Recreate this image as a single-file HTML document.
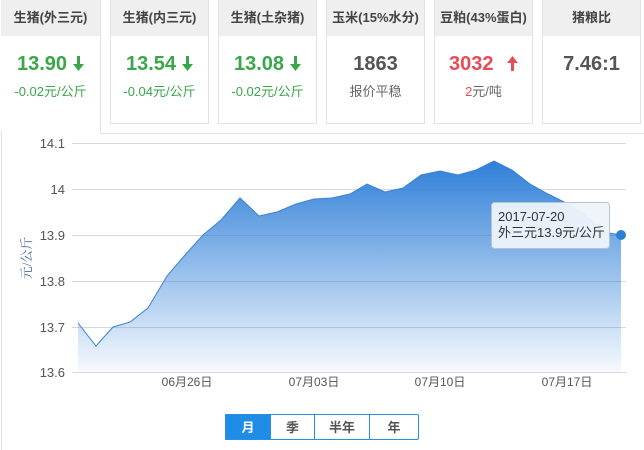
<!DOCTYPE html>
<html><head><meta charset="utf-8"><style>
*{margin:0;padding:0;box-sizing:border-box}
body{width:644px;height:450px;background:#fff;font-family:"Liberation Sans","Noto Sans CJK SC",sans-serif;position:relative;overflow:hidden}
.card{position:absolute;top:0;height:124px;border:1px solid #e2e2e2;border-top:none;background:#fff;text-align:center}
.hd{height:36px;background:#efefef;line-height:36px;font-size:13px;font-weight:bold;color:#444}
.v{font-size:20px;font-weight:bold;margin-top:13px;height:30px;line-height:30px;color:#555}
.s{font-size:13px;color:#666;margin-top:2px}
.g{color:#3aa64a}.r{color:#e84c57}
.ar{display:inline-block;vertical-align:-1px;margin-left:6px}
.btn{position:absolute;top:414px;height:26px;line-height:26px;text-align:center;font-size:13px;font-weight:bold;color:#555;border:1px solid #2b8ee0}
</style></head><body>
<div style="position:absolute;left:1px;top:0;width:1px;height:450px;background:#e2e2e2"></div>
<div style="position:absolute;left:100px;top:0;width:1px;height:134px;background:#e2e2e2"></div>
<div style="position:absolute;left:100px;top:133px;width:544px;height:1px;background:#e2e2e2"></div>
<div class="card" style="left:1px;width:99px;border:none;height:130px"><div class="hd">生猪(外三元)</div><div class="v g">13.90<svg class="ar" width="11" height="15" viewBox="0 0 11 15"><path d="M4,0H7V8H11L5.5,15L0,8H4Z" fill="#3aa64a"/></svg></div><div class="s g">-0.02元/公斤</div></div>
<div class="card" style="left:110px;width:99px"><div class="hd">生猪(内三元)</div><div class="v g">13.54<svg class="ar" width="11" height="15" viewBox="0 0 11 15"><path d="M4,0H7V8H11L5.5,15L0,8H4Z" fill="#3aa64a"/></svg></div><div class="s g">-0.04元/公斤</div></div>
<div class="card" style="left:218px;width:99px"><div class="hd">生猪(土杂猪)</div><div class="v g">13.08<svg class="ar" width="11" height="15" viewBox="0 0 11 15"><path d="M4,0H7V8H11L5.5,15L0,8H4Z" fill="#3aa64a"/></svg></div><div class="s g">-0.02元/公斤</div></div>
<div class="card" style="left:326px;width:99px"><div class="hd">玉米(15%水分)</div><div class="v">1863</div><div class="s">报价平稳</div></div>
<div class="card" style="left:434px;width:99px"><div class="hd">豆粕(43%蛋白)</div><div class="v r">3032 <svg class="ar" style="margin-left:8px" width="11" height="15" viewBox="0 0 11 15"><path d="M4,15H7V7H11L5.5,0L0,7H4Z" fill="#e84c57"/></svg></div><div class="s"><span class="r">2</span>元/吨</div></div>
<div class="card" style="left:542px;width:99px"><div class="hd">猪粮比</div><div class="v">7.46:1</div></div>
<svg width="644" height="450" style="position:absolute;left:0;top:0" font-family="Liberation Sans,Noto Sans CJK SC,sans-serif">
<defs><linearGradient id="gr" x1="0" y1="0" x2="0" y2="1"><stop offset="0" stop-color="#2f7fd8"/><stop offset="1" stop-color="#2f7fd8" stop-opacity="0.04"/></linearGradient></defs>
<g stroke="#d8d8d8" stroke-width="1">
<line x1="72" y1="143.5" x2="626" y2="143.5"/><line x1="72" y1="189.5" x2="626" y2="189.5"/><line x1="72" y1="235.5" x2="626" y2="235.5"/><line x1="72" y1="281.5" x2="626" y2="281.5"/><line x1="72" y1="327.5" x2="626" y2="327.5"/><line x1="72" y1="372.5" x2="626" y2="372.5"/></g>
<path d="M78,323 L96,346 L113,327 L130,322 L148,308 L167,276 L185,255 L203,235 L221,220 L240,198 L259,216 L277,212 L296,204 L314,199 L332,198 L350,194 L367,184 L385,192 L403,188 L421,175 L440,171 L458,175 L476,170 L494,161 L512,170 L530,184 L548,194 L566,203 L584,214 L603,232 L621,235 L621,372 L78,372 Z" fill="url(#gr)"/>
<path d="M78,323 L96,346 L113,327 L130,322 L148,308 L167,276 L185,255 L203,235 L221,220 L240,198 L259,216 L277,212 L296,204 L314,199 L332,198 L350,194 L367,184 L385,192 L403,188 L421,175 L440,171 L458,175 L476,170 L494,161 L512,170 L530,184 L548,194 L566,203 L584,214 L603,232 L621,235" fill="none" stroke="#3a82d4" stroke-width="1"/>
<circle cx="621" cy="235" r="5" fill="#2b7fd8"/>
<g font-size="13" fill="#555" text-anchor="end"><text x="65" y="148">14.1</text><text x="65" y="194">14</text><text x="65" y="240">13.9</text><text x="65" y="286">13.8</text><text x="65" y="332">13.7</text><text x="65" y="377">13.6</text></g>
<text transform="translate(31,258) rotate(-90)" font-size="13" fill="#4a6a9a" text-anchor="middle" font-family="Liberation Serif,Noto Serif CJK SC,serif">元/公斤</text>
<g font-size="12" fill="#555" text-anchor="middle"><text x="187" y="386">06月26日</text><text x="314" y="386">07月03日</text><text x="440" y="386">07月10日</text><text x="567" y="386">07月17日</text></g>
<rect x="491.5" y="202.5" width="118" height="46" rx="3" fill="#eef3fa" fill-opacity="0.95" stroke="#b0c4dc"/>
<text x="498" y="221" font-size="13" fill="#333">2017-07-20</text><text x="498" y="237" font-size="13" fill="#333">外三元13.9元/公斤</text>
</svg>
<div class="btn" style="left:225px;width:46px;background:#1f8ce5;color:#fff">月</div>
<div class="btn" style="left:270px;width:45px">季</div>
<div class="btn" style="left:314px;width:56px">半年</div>
<div class="btn" style="left:369px;width:50px;border-radius:0 2px 2px 0">年</div>
</body></html>
